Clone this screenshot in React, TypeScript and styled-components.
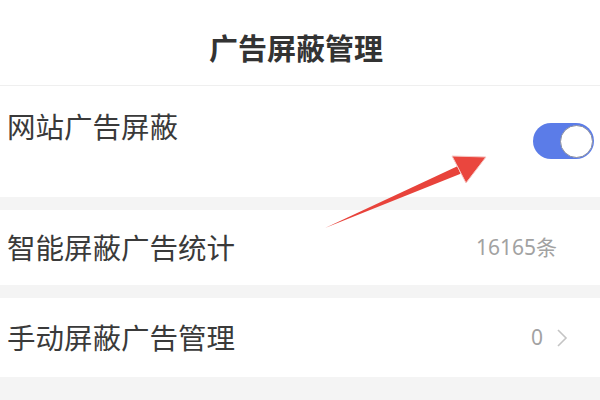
import styled, { createGlobalStyle } from 'styled-components'

const GlobalStyle = createGlobalStyle`
  html, body {
    margin: 0;
    padding: 0;
    background: #f4f4f4;
    font-family: "Noto Sans CJK SC", "Noto Sans", sans-serif;
    color: #333;
  }
`

export default function App() {
  return (
    <>
      <GlobalStyle />
      <Page>
        <Header>
          <Title>广告屏蔽管理</Title>
        </Header>
        <SwitchRow>
          <Label>网站广告屏蔽</Label>
          <Toggle>
            <Knob />
          </Toggle>
        </SwitchRow>
        <Row $height={75}>
          <Label>智能屏蔽广告统计</Label>
          <Value $right={43}>16165条</Value>
        </Row>
        <Row $height={79}>
          <Label>手动屏蔽广告管理</Label>
          <Value $right={32}>
            0
            <Chevron width="12" height="20" viewBox="0 0 12 20">
              <path d="M2 2 L10 10 L2 18" fill="none" stroke="#c4c4c4" strokeWidth="1.6" />
            </Chevron>
          </Value>
        </Row>
        <Arrow width="600" height="400" viewBox="0 0 600 400">
          <polygon points="325,228 457.4,166.3 460.6,173.7" fill="#e8433b" />
          <polygon points="486,157 452,156 466,183" fill="#ea463e" stroke="#f6c9c6" strokeWidth="1" />
        </Arrow>
      </Page>
    </>
  )
}

const Page = styled.div`
  position: relative;
  width: 600px;
  height: 400px;
  overflow: hidden;
  display: flex;
  flex-direction: column;
  gap: 13px;
  background: #f4f4f4;
`

const Header = styled.div`
  height: 86px;
  display: flex;
  align-items: center;
  justify-content: center;
  padding-right: 8px;
  box-sizing: border-box;
  background: #fff;
  margin-bottom: -13px;
  border-bottom: 1px solid #efefef;
`

const Title = styled.div`
  font-size: 29px;
  font-weight: 700;
  line-height: 1;
  color: #333;
  margin-top: 10px;
`

const SwitchRow = styled.div`
  height: 111px;
  background: #fff;
  display: flex;
  justify-content: space-between;
  align-items: flex-start;
  padding: 26px 6px 0 7px;
  box-sizing: border-box;
`

const Row = styled.div<{ $height: number }>`
  height: ${(p) => p.$height}px;
  background: #fff;
  display: flex;
  align-items: center;
  justify-content: space-between;
  padding-left: 7px;
  box-sizing: border-box;
`

const Label = styled.div`
  font-size: 28.5px;
  font-weight: 400;
  line-height: 1;
  color: #3a3a3a;
`

const Value = styled.div<{ $right: number }>`
  display: flex;
  align-items: center;
  gap: 13px;
  margin-right: ${(p) => p.$right}px;
  font-size: 21px;
  line-height: 1;
  color: #a2a2a2;
  font-family: "Noto Sans", "Noto Sans CJK SC", sans-serif;
`

const Chevron = styled.svg`
  display: block;
`

const Toggle = styled.div`
  width: 61px;
  height: 36px;
  margin-top: 11px;
  border-radius: 18px;
  background: #5b7ce8;
  display: flex;
  align-items: center;
  justify-content: flex-end;
  padding: 0 1px;
  box-sizing: border-box;
`

const Knob = styled.div`
  width: 33px;
  height: 33px;
  border-radius: 50%;
  background: #fff;
  border: 1.5px solid #8b8fa0;
  box-sizing: border-box;
`

const Arrow = styled.svg`
  position: absolute;
  left: 0;
  top: 0;
  pointer-events: none;
`
